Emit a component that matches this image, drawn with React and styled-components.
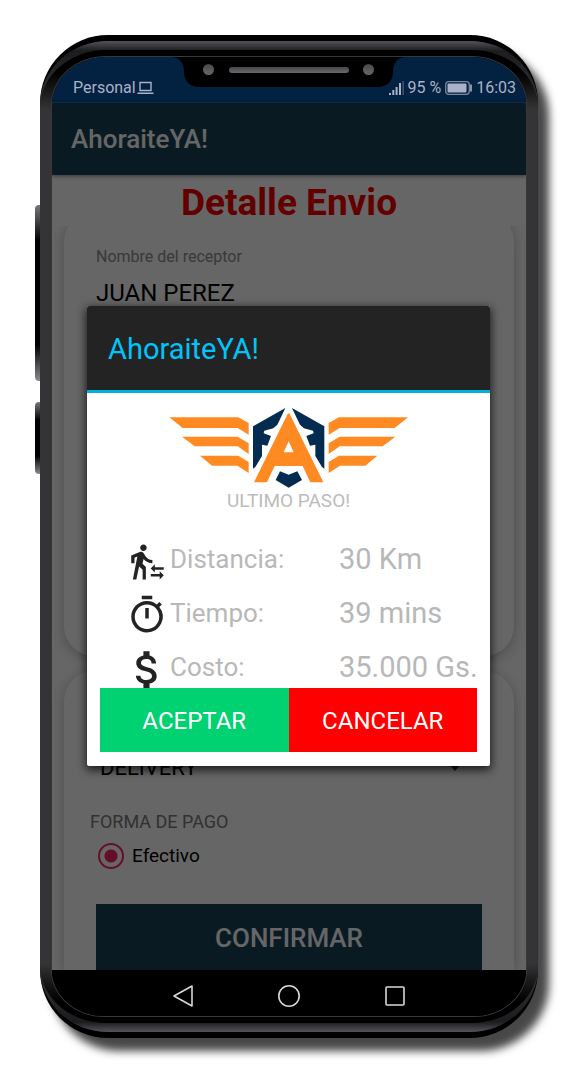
import React from "react";
import styled, { createGlobalStyle } from "styled-components";
import { MdTransferWithinAStation, MdOutlineTimer, MdAttachMoney } from "react-icons/md";

const GlobalStyle = createGlobalStyle`
  *, *::before, *::after { box-sizing: border-box; }
  body { margin: 0; background: #fff; font-family: Roboto, "Liberation Sans", sans-serif; }
  button, input, select { font: inherit; margin: 0; border: 0; border-radius: 0; }
  h1, h2, p { margin: 0; font-weight: 400; }
`;

const Page = styled.div`
  display: flex;
  padding: 35px 38px 42px 35px;
`;

const SideKeys = styled.div`
  flex: 0 0 5px;
  display: flex;
  flex-direction: column;
  gap: 21px;
  padding-top: 170px;
`;

const SideKey = styled.span`
  height: ${(p) => p.$length}px;
  border-radius: 4px 0 0 4px;
  background: linear-gradient(#77777c, #000 ${(p) => p.$fade}px, #000 calc(100% - ${(p) => p.$fade}px), #8a8a8e);
`;

const Phone = styled.div`
  flex: 1;
  min-width: 0;
  padding: 6px 0;
  border-radius: 68px;
  background: #000;
  box-shadow: 11px 13px 8px rgba(0, 0, 0, 0.72);
`;

const Bezel = styled.div`
  padding: 9px 0;
  border-radius: 68px / 64px;
  background: linear-gradient(
    #55535a,
    #1c1b1e 10px,
    #343436 60px,
    #343436 calc(100% - 60px),
    #1c1b1e calc(100% - 10px),
    #55535a
  );
`;

const Rim = styled.div`
  padding: 7px 12px;
  border-radius: 66px / 58px;
  background: linear-gradient(#000 20px, transparent 60px, transparent calc(100% - 60px), #000 calc(100% - 20px));
`;

const Screen = styled.div`
  position: relative;
  overflow: hidden;
  border-radius: 54px 54px 52px 52px / 48px 48px 46px 46px;
  background: #000;
  box-shadow: 0 0 0 1px #38383a;
`;

const Notch = styled.svg`
  position: absolute;
  top: 0;
  left: 50%;
  transform: translateX(-50%);
  display: block;
`;

const StatusBar = styled.div`
  display: flex;
  align-items: flex-end;
  justify-content: space-between;
  height: 46px;
  padding: 0 10px 4px 21px;
  border-bottom: 1px solid #123052;
  background: #032140;
  color: #a9b3c8;
  font-size: 16px;
  line-height: 20px;
`;

const StatusGroup = styled.div`
  display: flex;
  align-items: center;
  gap: ${(p) => p.$gap}px;
`;

const Window = styled.div`
  position: relative;
  background: #fff;
`;

const AppBar = styled.header`
  position: relative;
  display: flex;
  align-items: center;
  height: 72px;
  padding: 0 19px;
  background: #194159;
  box-shadow: 0 1px 4px rgba(0, 0, 0, 0.5);
`;

const AppName = styled.h1`
  color: #fff;
  font-size: 26px;
  font-weight: 500;
  line-height: 32px;
`;

const Heading = styled.h2`
  padding: 6px 0 1px;
  color: #f50000;
  font-size: 37px;
  font-weight: 700;
  line-height: 44px;
  text-align: center;
`;

const Cards = styled.div`
  display: flex;
  flex-direction: column;
  gap: 15px;
  padding: 0 12px;
  overflow: hidden;
`;

const Card = styled.section`
  padding: ${(p) => p.$top}px 26px 0;
  border-radius: ${(p) => (p.$open ? "30px 30px 0 0" : "30px")};
  background: #fff;
  box-shadow: 0 3px 14px rgba(0, 0, 0, 0.26);
`;

const RecipientCard = styled(Card)`
  min-height: 444px;
  margin-top: -14px;
`;

const Field = styled.label`
  display: flex;
  flex-direction: column;
  padding: 0 6px;
  color: #8e8e8e;
  font-size: 16px;
  line-height: 20px;
`;

const TextInput = styled.input`
  width: 100%;
  height: 52px;
  padding: 0;
  background: transparent;
  color: #000;
  font-size: 24px;
`;

const SelectBox = styled.div`
  display: grid;
  align-items: center;
  padding: 0 26px 0 10px;
  > * { grid-area: 1 / 1; }
  > svg { justify-self: end; pointer-events: none; }
`;

const Select = styled.select`
  appearance: none;
  height: 40px;
  padding: 0;
  background: transparent;
  color: #000;
  font-size: 22px;
`;

const PaymentGroup = styled.fieldset`
  margin: 23px 0 35px;
  padding: 0;
  border: 0;
  min-width: 0;
`;

const PaymentLegend = styled.legend`
  padding: 0;
  margin-bottom: 9px;
  color: #7c7c7c;
  font-size: 18px;
  line-height: 24px;
`;

const RadioLabel = styled.label`
  display: flex;
  align-items: center;
  gap: 8px;
  padding-left: 8px;
  color: #000;
  font-size: 19px;
  line-height: 28px;
  height: 26px;
`;

const Radio = styled.input`
  appearance: none;
  width: 26px;
  height: 26px;
  border: 2px solid #ff2468;
  border-radius: 50%;
  background: radial-gradient(circle, #ff2468 6px, transparent 7px);
`;

const ConfirmButton = styled.button`
  display: block;
  width: calc(100% - 12px);
  height: 66px;
  margin: 0 6px;
  padding: 2px 0 0;
  background: #194159;
  color: #fff;
  font-size: 26px;
  font-weight: 500;
`;

const Overlay = styled.div`
  position: absolute;
  inset: 0;
  display: flex;
  align-items: center;
  padding: 0 36px 1px 35px;
  background: rgba(0, 0, 0, 0.6);
`;

const Dialog = styled.div`
  flex: 1;
  min-width: 0;
  border-radius: 2px;
  background: #fff;
  box-shadow: 0 3px 10px 1px rgba(0, 0, 0, 0.75);
`;

const DialogTitle = styled.h2`
  padding: 24px 21px 22px;
  border-bottom: 3px solid #00b0da;
  border-radius: 2px 2px 0 0;
  background: #232323;
  color: #00c4fa;
  font-size: 29px;
  line-height: 38px;
`;

const DialogBody = styled.div`
  padding: 15px 0 14px;
`;

const Logo = styled.svg`
  display: block;
  margin: 0 auto;
`;

const Caption = styled.p`
  margin-bottom: 20px;
  color: #bcbcbc;
  font-size: 19px;
  line-height: 26px;
  text-align: center;
`;

const Details = styled.dl`
  height: 154px;
  margin: 0;
  overflow: hidden;
`;

const DetailRow = styled.div`
  display: grid;
  grid-template-columns: 46px 169px 1fr;
  align-items: center;
  height: 54px;
  padding-left: 37px;
  color: #b8b8b8;
  white-space: nowrap;
`;

const DetailIcon = styled.span`
  display: flex;
  justify-content: center;
  color: #232323;
  svg { flex: none; }
`;

const DetailLabel = styled.dt`
  padding-bottom: 4px;
  font-size: 26px;
  line-height: 32px;
`;

const DetailValue = styled.dd`
  margin: 0;
  padding-bottom: 4px;
  font-size: 29px;
  line-height: 32px;
`;

const Actions = styled.div`
  display: flex;
  padding: 0 13px;
`;

const ActionButton = styled.button`
  flex: 1;
  height: 64px;
  padding: 2px 0 0;
  background: ${(p) => p.$color};
  color: #fff;
  font-size: 24px;
`;

const NavBar = styled.nav`
  display: flex;
  justify-content: center;
  gap: 76px;
  height: 46px;
  padding-top: 11px;
  background: #000;
`;

const NavButton = styled.button`
  display: flex;
  align-items: center;
  justify-content: center;
  width: 30px;
  height: 30px;
  padding: 0;
  background: transparent;
  color: #d8d8d8;
`;

const Laptop = () => (
  <svg width="17" height="14" viewBox="0 0 17 14" fill="none" stroke="currentColor">
    <path d="M3 1.5h11v8H3z" strokeWidth="1.4" />
    <path d="M0.5 12.3h16" strokeWidth="1.6" />
  </svg>
);

const Signal = () => (
  <svg width="16" height="14" viewBox="0 0 16 14" fill="currentColor">
    <path d="M0 12h2v2H0zM3.3 9h2v5h-2zM6.6 6h2v8h-2zM10 2h2v12h-2z" />
    <path d="M13.4 0h1.6v14h-1.6z" opacity="0.35" />
  </svg>
);

const Battery = () => (
  <svg width="27" height="14" viewBox="0 0 27 14">
    <rect x="0.7" y="0.7" width="23.6" height="12.6" rx="3" fill="none" stroke="#7c879d" strokeWidth="1.3" />
    <rect x="2.5" y="2.5" width="19" height="9" rx="1" fill="#a9b3c8" />
    <path d="M26 3.5v7" stroke="#a9b3c8" strokeWidth="1.6" />
  </svg>
);

const Earpiece = () => (
  <Notch width="238" height="31" viewBox="0 0 238 31" aria-hidden="true">
    <defs>
      <linearGradient id="metal" x1="0" y1="0" x2="0" y2="1">
        <stop offset="0" stopColor="#47464a" />
        <stop offset="1" stopColor="#68676b" />
      </linearGradient>
    </defs>
    <path d="M0 0C10 0 14 6 14 15C14 24 20 30 30 30H207C217 30 223 24 223 15C223 6 227 0 237 0Z" fill="#000" />
    <circle cx="38.5" cy="12.5" r="5.5" fill="url(#metal)" />
    <rect x="59" y="10" width="120" height="6" rx="3" fill="url(#metal)" />
    <circle cx="198.5" cy="12.5" r="5.5" fill="url(#metal)" />
  </Notch>
);

const Wing = () => (
  <path
    fill="#ff8a22"
    d="M58 84H265L296 101V136L263 116H98ZM96 142H263L296 162V194L263 171H134ZM150 199H265L296 218V251L262 229H186Z"
  />
);

const Helmet = () => (
  <path fill="#042c50" d="M406 56L309 111V238L316 233L336 200V166L352 169L363 140L341 132L343 124L370 117L382 106L390 90Z" />
);

const WingedLogo = () => (
  <Logo width="240" height="80" viewBox="57 56 720 240" role="img" aria-label="AhoraiteYA!">
    <Wing />
    <Helmet />
    <g transform="translate(832 0) scale(-1 1)">
      <Wing />
      <Helmet />
    </g>
    <path fill="#042c50" d="M390 246L416 256L442 246L456 272L416 295L377 272Z" />
    <path
      fill="#ff8a22"
      fillRule="evenodd"
      d="M411 78Q416 66 421 78L520 279H481L458 230H374L351 279H312ZM416 156L401 189H431Z"
    />
  </Logo>
);

const DETAILS = [
  { label: "Distancia:", value: "30 Km", icon: <MdTransferWithinAStation size={39} /> },
  { label: "Tiempo:", value: "39 mins", icon: <MdOutlineTimer size={42} /> },
  { label: "Costo:", value: "35.000 Gs.", icon: <MdAttachMoney size={49} /> },
];

export default function App() {
  return (
    <>
      <GlobalStyle />
      <Page>
        <SideKeys>
          <SideKey $length={176} $fade={36} />
          <SideKey $length={72} $fade={18} />
        </SideKeys>
        <Phone>
          <Bezel>
            <Rim>
              <Screen>
                <StatusBar>
                  <StatusGroup $gap={1}>
                    <span>Personal</span>
                    <Laptop />
                  </StatusGroup>
                  <StatusGroup $gap={4}>
                    <StatusGroup $gap={2}>
                      <Signal />
                      <span>95 %</span>
                    </StatusGroup>
                    <Battery />
                    <span>16:03</span>
                  </StatusGroup>
                </StatusBar>
                <Window>
                  <AppBar>
                    <AppName>AhoraiteYA!</AppName>
                  </AppBar>
                  <Heading>Detalle Envio</Heading>
                  <Cards>
                    <RecipientCard $top={35}>
                      <Field>
                        Nombre del receptor
                        <TextInput defaultValue="JUAN PEREZ" />
                      </Field>
                    </RecipientCard>
                    <Card $top={76} $open>
                      <SelectBox>
                        <Select aria-label="Servicio" defaultValue="DELIVERY">
                          <option>DELIVERY</option>
                        </Select>
                        <svg width="14" height="8" viewBox="0 0 14 8">
                          <path d="M0 0h14L7 8z" fill="#333" />
                        </svg>
                      </SelectBox>
                      <PaymentGroup>
                        <PaymentLegend>FORMA DE PAGO</PaymentLegend>
                        <RadioLabel>
                          <Radio type="radio" name="pago" defaultChecked />
                          Efectivo
                        </RadioLabel>
                      </PaymentGroup>
                      <ConfirmButton type="button">CONFIRMAR</ConfirmButton>
                    </Card>
                  </Cards>
                  <Overlay>
                    <Dialog role="dialog" aria-labelledby="dialog-title">
                      <DialogTitle id="dialog-title">AhoraiteYA!</DialogTitle>
                      <DialogBody>
                        <WingedLogo />
                        <Caption>ULTIMO PASO!</Caption>
                        <Details>
                          {DETAILS.map((d) => (
                            <DetailRow key={d.label}>
                              <DetailIcon>{d.icon}</DetailIcon>
                              <DetailLabel>{d.label}</DetailLabel>
                              <DetailValue>{d.value}</DetailValue>
                            </DetailRow>
                          ))}
                        </Details>
                        <Actions>
                          <ActionButton type="button" $color="#00d271">ACEPTAR</ActionButton>
                          <ActionButton type="button" $color="#ff0000">CANCELAR</ActionButton>
                        </Actions>
                      </DialogBody>
                    </Dialog>
                  </Overlay>
                </Window>
                <NavBar>
                  <NavButton type="button" aria-label="Atrás">
                    <svg width="22" height="24" viewBox="0 0 22 24" fill="none" stroke="currentColor" strokeWidth="1.6" strokeLinejoin="round">
                      <path d="M20 2V22L2 12Z" />
                    </svg>
                  </NavButton>
                  <NavButton type="button" aria-label="Inicio">
                    <svg width="24" height="24" viewBox="0 0 24 24" fill="none" stroke="currentColor" strokeWidth="1.6">
                      <circle cx="12" cy="12" r="10.2" />
                    </svg>
                  </NavButton>
                  <NavButton type="button" aria-label="Recientes">
                    <svg width="22" height="22" viewBox="0 0 22 22" fill="none" stroke="currentColor" strokeWidth="1.6">
                      <rect x="2" y="2" width="18" height="18" rx="1" />
                    </svg>
                  </NavButton>
                </NavBar>
                <Earpiece />
              </Screen>
            </Rim>
          </Bezel>
        </Phone>
      </Page>
    </>
  );
}
